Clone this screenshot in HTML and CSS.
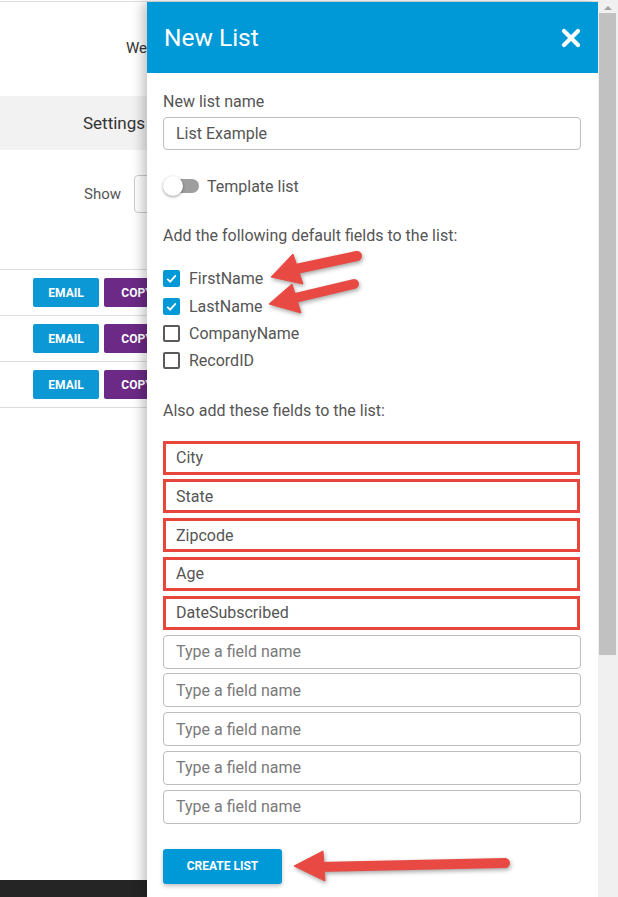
FILE: index.html
```html
<!DOCTYPE html>
<html>
<head>
<meta charset="utf-8">
<link rel="stylesheet" href="styles.css">
</head>
<body>
<div class="topline"></div>
<div class="bg">
  <div class="pagehead">Welcome</div>
  <div class="settings">Settings</div>
  <div class="showrow"><span>Show</span><span class="select"></span></div>
  <div class="table">
    <div class="trow"><span class="btn email">EMAIL</span><span class="btn copy">COPY</span></div>
    <div class="trow"><span class="btn email">EMAIL</span><span class="btn copy">COPY</span></div>
    <div class="trow"><span class="btn email">EMAIL</span><span class="btn copy">COPY</span></div>
  </div>
  <div class="footer"></div>
</div>

<div class="panel">
  <div class="sheet">
    <div class="header">
      <span class="title">New List</span>
      <svg class="close" width="20" height="20" viewBox="0 0 20 20"><path d="M3 3 L17 17 M17 3 L3 17" stroke="#fff" stroke-width="4.2" stroke-linecap="round"/></svg>
    </div>
    <div class="body">
      <div class="label first">New list name</div>
      <div class="input name">List Example</div>
      <div class="toggle-row">
        <span class="toggle"><span class="track"></span><span class="knob"></span></span>
        <span>Template list</span>
      </div>
      <div class="label sec1">Add the following default fields to the list:</div>
      <div class="checks">
        <div class="check"><span class="box on"><svg width="13" height="13" viewBox="0 0 13 13"><path d="M2.2 6.8 L5.2 9.6 L10.8 3.4" fill="none" stroke="#fff" stroke-width="1.8"/></svg></span>FirstName</div>
        <div class="check"><span class="box on"><svg width="13" height="13" viewBox="0 0 13 13"><path d="M2.2 6.8 L5.2 9.6 L10.8 3.4" fill="none" stroke="#fff" stroke-width="1.8"/></svg></span>LastName</div>
        <div class="check"><span class="box"></span>CompanyName</div>
        <div class="check"><span class="box"></span>RecordID</div>
      </div>
      <div class="label sec2">Also add these fields to the list:</div>
      <div class="fields">
        <div class="input hl">City</div>
        <div class="input hl">State</div>
        <div class="input hl">Zipcode</div>
        <div class="input hl">Age</div>
        <div class="input hl">DateSubscribed</div>
        <div class="input ph">Type a field name</div>
        <div class="input ph">Type a field name</div>
        <div class="input ph">Type a field name</div>
        <div class="input ph">Type a field name</div>
        <div class="input ph">Type a field name</div>
      </div>
      <div class="create">CREATE LIST</div>
    </div>
  </div>
  <div class="scrollbar">
    <div class="sb-up"></div>
    <div class="sb-thumb"></div>
  </div>
</div>

<svg class="arrows" width="618" height="897" viewBox="0 0 618 897">
  <g fill="#e84a43" stroke="#e84a43">
    <line x1="296" y1="269" x2="357" y2="256" stroke-width="10" stroke-linecap="round"/>
    <polygon points="271,277 293,254 303,284" stroke-width="1" stroke-linejoin="round"/>
    <line x1="295" y1="298" x2="354" y2="284" stroke-width="10" stroke-linecap="round"/>
    <polygon points="269,304 292,284 301,313" stroke-width="1" stroke-linejoin="round"/>
    <line x1="318" y1="867" x2="505" y2="863" stroke-width="10" stroke-linecap="round"/>
    <polygon points="294,866 323,851 325,881" stroke-width="1" stroke-linejoin="round"/>
  </g>
</svg>
</body>
</html>
```
FILE: styles.css
```css
* { box-sizing: border-box; }
html, body { margin: 0; padding: 0; }
body {
  width: 618px;
  height: 897px;
  overflow: hidden;
  position: relative;
  font-family: Roboto, "Liberation Sans", sans-serif;
  background: #fff;
}

/* background page */
.topline {
  margin-top: 1px;
  height: 1px;
  background: #dedede;
}
.bg {
  width: 147px;
  height: 895px;
  overflow: hidden;
  display: flex;
  flex-direction: column;
}
.pagehead {
  height: 94px;
  display: flex;
  align-items: center;
  padding-left: 126px;
  font-size: 15px;
  color: #333;
  padding-bottom: 2px;
  white-space: nowrap;
}
.settings {
  height: 54px;
  background: #f2f2f2;
  display: flex;
  align-items: center;
  padding-left: 83px;
  font-size: 17px;
  color: #333;
  white-space: nowrap;
}
.showrow {
  margin-top: 25px;
  height: 38px;
  display: flex;
  align-items: center;
  gap: 13px;
  padding-left: 84px;
  font-size: 15px;
  color: #555;
}
.select {
  flex: none;
  width: 100px;
  height: 38px;
  border: 1px solid #ccc;
  border-radius: 4px;
}
.table {
  margin-top: 56px;
  border-top: 1px solid #ddd;
}
.trow {
  height: 46px;
  border-bottom: 1px solid #ddd;
  display: flex;
  gap: 5px;
  padding: 8px 0 0 33px;
}
.btn {
  flex: none;
  height: 29px;
  border-radius: 2px;
  color: #fff;
  font-size: 12px;
  font-weight: 700;
  display: flex;
  align-items: center;
  justify-content: center;
}
.email { width: 66px; background: #0b98d5; }
.copy { width: 66px; background: #6c2a86; }
.footer {
  margin-top: auto;
  height: 17px;
  width: 147px;
  background: #252525;
}

/* panel */
.panel {
  position: absolute;
  left: 147px;
  top: 0;
  width: 471px;
  height: 897px;
  display: flex;
}
.sheet {
  margin-top: 2px;
  width: 451px;
  background: #fff;
  box-shadow: -5px 0 10px rgba(0,0,0,0.22);
}
.header {
  height: 71px;
  background: #0099d8;
  display: flex;
  align-items: center;
  justify-content: space-between;
  padding: 0 17px 0 17px;
}
.title {
  color: #fff;
  font-size: 24.5px;
  font-weight: 400;
}
.body {
  padding: 20px 17px 0 16px;
  color: #555;
}
.label {
  font-size: 16px;
  line-height: 18px;
  color: #555;
}
.input {
  height: 33px;
  border: 1px solid #bdbdbd;
  border-radius: 4px;
  display: flex;
  align-items: center;
  padding-left: 12px;
  font-size: 16px;
  color: #555;
}
.input.name { margin-top: 6px; }
.toggle-row {
  margin-top: 26px;
  height: 20px;
  display: flex;
  align-items: center;
  gap: 8px;
  font-size: 16px;
  color: #555;
}
.toggle {
  position: relative;
  width: 36px;
  height: 20px;
  display: flex;
  align-items: center;
}
.track {
  margin-left: 2px;
  width: 34px;
  height: 14px;
  border-radius: 7px;
  background: #9e9e9e;
}
.knob {
  position: absolute;
  left: 0;
  top: 0;
  width: 20px;
  height: 20px;
  border-radius: 50%;
  background: #fff;
  box-shadow: 0 1px 3px rgba(0,0,0,0.4);
}
.sec1 { margin-top: 31px; }
.checks { margin-top: 20px; }
.check {
  height: 27.4px;
  display: flex;
  align-items: center;
  gap: 9px;
  font-size: 16px;
  color: #555;
}
.box {
  width: 17px;
  height: 17px;
  border: 2px solid #5a5a5a;
  border-radius: 2px;
  display: flex;
  align-items: center;
  justify-content: center;
}
.box.on { background: #0099d8; border-color: #0099d8; }
.sec2 { margin-top: 27px; }
.fields {
  margin-top: 21px;
  display: flex;
  flex-direction: column;
  gap: 4.8px;
}
.fields .input { height: 34px; }
.input.hl {
  border: 3px solid #e8453c;
  border-radius: 0;
  padding-left: 10px;
  width: 417px;
}
.input.ph { color: #7a7a7a; }
.create {
  margin-top: 25px;
  width: 119px;
  height: 35px;
  background: #0099d8;
  border-radius: 3px;
  color: #fff;
  font-size: 12px;
  font-weight: 700;
  display: flex;
  align-items: center;
  justify-content: center;
  box-shadow: 0 2px 4px rgba(0,0,0,0.25);
}

/* scrollbar */
.scrollbar {
  width: 20px;
  height: 897px;
  background: #f0f0f0;
  position: relative;
}
.sb-up {
  position: absolute;
  left: 6px;
  top: 6px;
  width: 0;
  height: 0;
  border-left: 4px solid transparent;
  border-right: 4px solid transparent;
  border-bottom: 4px solid #a3a3a3;
}
.sb-thumb {
  position: absolute;
  left: 1px;
  top: 13px;
  width: 17px;
  height: 642px;
  background: #c1c1c1;
}

.arrows {
  position: absolute;
  left: 0;
  top: 0;
  pointer-events: none;
  filter: drop-shadow(1px 2px 2px rgba(0,0,0,0.35));
}
```
